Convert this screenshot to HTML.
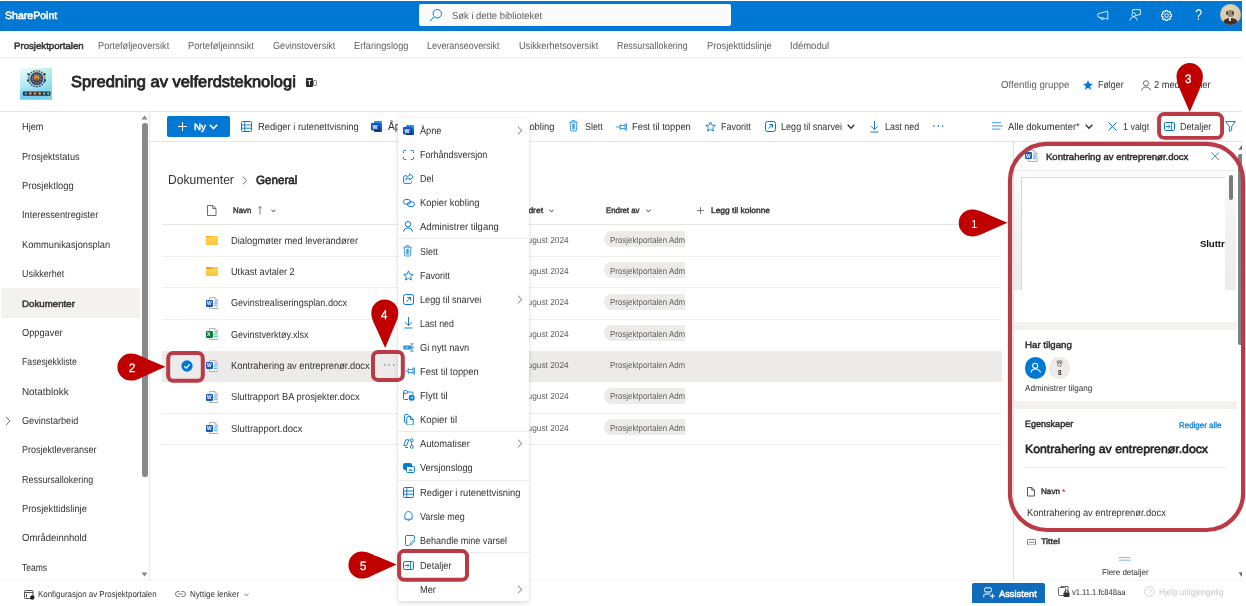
<!DOCTYPE html><html lang="nb"><head><meta charset="utf-8"><title>Dokumenter - General</title>
<style>
html,body{margin:0;padding:0;background:#fff;}
body{width:1246px;height:606px;overflow:hidden;position:relative;font-family:"Liberation Sans", sans-serif;}
#r{position:absolute;left:0;top:0;width:1246px;height:606px;overflow:hidden;will-change:transform;}
#r div,#r svg{position:absolute;}
#r span{position:absolute;white-space:nowrap;line-height:16px;height:16px;transform-origin:0 50%;}
</style></head><body><div id="r">
<div style="left:0px;top:1px;width:1242px;height:30px;background:#0078d4;"></div>
<div style="left:419.4px;top:4.3px;width:311.5px;height:21.3px;background:#fafafa;border-radius:2px;"></div>
<div style="left:0px;top:57px;width:1242px;height:1px;background:#edebe9;"></div>
<div style="left:0px;top:110.5px;width:1242px;height:1px;background:#e6e5e4;"></div>
<div style="left:1.2px;top:288.2px;width:139.3px;height:29.4px;background:#f3f2f1;"></div>
<div style="left:142.4px;top:123px;width:5.7px;height:354px;background:#8a8a8a;border-radius:2.8px;"></div>
<div style="left:149.3px;top:111px;width:1px;height:469px;background:#ececec;"></div>
<div style="left:167px;top:115.5px;width:62.5px;height:21.5px;background:#0078d4;border-radius:2px;"></div>
<div style="left:150px;top:140.5px;width:1092px;height:1px;background:#e6e5e4;"></div>
<div style="left:162px;top:224.3px;width:840px;height:1px;background:#e6e5e4;"></div>
<div style="left:162px;top:350.6px;width:840px;height:31.2px;background:#edebe9;"></div>
<div style="left:604px;top:231.0px;width:81.2px;height:16.1px;background:#edebe9;border-radius:8.1px 0 0 8.1px;"></div>
<div style="left:162px;top:255.9px;width:840px;height:1px;background:#f0efee;"></div>
<div style="left:604px;top:262.35px;width:81.2px;height:16.1px;background:#edebe9;border-radius:8.1px 0 0 8.1px;"></div>
<div style="left:162px;top:287.2px;width:840px;height:1px;background:#f0efee;"></div>
<div style="left:604px;top:293.7px;width:81.2px;height:16.1px;background:#edebe9;border-radius:8.1px 0 0 8.1px;"></div>
<div style="left:162px;top:318.6px;width:840px;height:1px;background:#f0efee;"></div>
<div style="left:604px;top:325.05px;width:81.2px;height:16.1px;background:#edebe9;border-radius:8.1px 0 0 8.1px;"></div>
<div style="left:604px;top:387.75px;width:81.2px;height:16.1px;background:#edebe9;border-radius:8.1px 0 0 8.1px;"></div>
<div style="left:162px;top:412.6px;width:840px;height:1px;background:#f0efee;"></div>
<div style="left:604px;top:419.1px;width:81.2px;height:16.1px;background:#edebe9;border-radius:8.1px 0 0 8.1px;"></div>
<div style="left:162px;top:444px;width:840px;height:1px;background:#f0efee;"></div>
<div style="left:1013px;top:141px;width:1px;height:439px;background:#e1dfdd;"></div>
<div style="left:1014px;top:170.2px;width:223px;height:1px;background:#edebe9;"></div>
<div style="left:1013.7px;top:171px;width:222.3px;height:118.8px;background:linear-gradient(180deg,#fdfdfd 0%,#f3f3f3 40%,#ebebeb 100%);"></div>
<div style="left:1021.3px;top:177.2px;width:203.7px;height:112.6px;box-sizing:border-box;border:1px solid #d3d7de;border-right:none;border-bottom:none;background:#fff;"></div>
<div style="left:1229.1px;top:175.3px;width:3.8px;height:24.9px;background:#7a7a7a;border-radius:1.9px;"></div>
<div style="left:1014px;top:322px;width:222.6px;height:8px;background:#f3f2f1;"></div>
<div style="left:1014px;top:401px;width:222.6px;height:7.6px;background:#f3f2f1;"></div>
<div style="left:1025px;top:467px;width:200.7px;height:1px;background:#e9e7e5;"></div>
<div style="left:1238.2px;top:153.9px;width:3.8px;height:190.7px;background:#808080;border-radius:1.9px 0 0 1.9px;"></div>
<div style="left:0px;top:580.5px;width:398px;height:26px;background:#fff;"></div>
<svg style="left:429px;top:8px;" width="14" height="14" viewBox="0 0 14 14"><circle cx="8.3" cy="5.7" r="4.2" fill="none" stroke="#0078d4" stroke-width="1"/><path d="M5.3 8.7 L1 13" stroke="#0078d4" stroke-width="1" fill="none"/></svg>
<svg style="left:1097px;top:10.3px;" width="12" height="11" viewBox="0 0 12 11"><path d="M1 3.7 L10.8 1.2 V9.2 L1 6.9 Q0.3 5.3 1 3.7 Z M3.6 7.6 Q3.6 9.6 5.2 9.6 Q6.6 9.6 6.6 8.3" fill="none" stroke="#fff" stroke-width="0.85" stroke-linejoin="round"/></svg>
<svg style="left:1129.3px;top:9px;" width="12" height="12" viewBox="0 0 12 12"><path d="M3.6 3.2 V0.6 H11.4 V5.6 H9.2 L7.8 7 V5.6" fill="none" stroke="#fff" stroke-width="0.85" stroke-linejoin="round"/><circle cx="4.6" cy="5.6" r="1.9" fill="none" stroke="#fff" stroke-width="0.85"/><path d="M0.8 11.6 L2.6 8.3 Q4.6 7.3 6.6 8.3 L8.4 11.6" fill="none" stroke="#fff" stroke-width="0.85"/></svg>
<svg style="left:1161px;top:9.8px;" width="11" height="11" viewBox="0 0 11 11"><path d="M10.62 4.61 L10.62 6.39 L9.37 6.49 L8.94 7.54 L9.75 8.49 L8.49 9.75 L7.54 8.94 L6.49 9.37 L6.39 10.62 L4.61 10.62 L4.51 9.37 L3.46 8.94 L2.51 9.75 L1.25 8.49 L2.06 7.54 L1.63 6.49 L0.38 6.39 L0.38 4.61 L1.63 4.51 L2.06 3.46 L1.25 2.51 L2.51 1.25 L3.46 2.06 L4.51 1.63 L4.61 0.38 L6.39 0.38 L6.49 1.63 L7.54 2.06 L8.49 1.25 L9.75 2.51 L8.94 3.46 L9.37 4.51 Z" fill="none" stroke="#fff" stroke-width="1.05" stroke-linejoin="round"/><circle cx="5.5" cy="5.5" r="1.8" fill="none" stroke="#fff" stroke-width="1"/></svg>
<div style="left:1219.9px;top:4.4px;width:21px;height:21px;border-radius:50%;overflow:hidden;background:radial-gradient(circle at 45% 35%,#e6d9bd 0%,#d9c8a6 60%,#c9b48e 100%);"><div style="left:3px;top:13.5px;width:15px;height:12px;border-radius:45% 45% 0 0;background:#3b342d;"></div><div style="left:7.3px;top:5.2px;width:6.4px;height:7.6px;border-radius:50%;background:#9a8a74;"></div><div style="left:6.6px;top:6.5px;width:2px;height:4px;border-radius:50%;background:#4a4037;"></div><div style="left:12.4px;top:6.5px;width:2px;height:4px;border-radius:50%;background:#4a4037;"></div><div style="left:9.6px;top:12.3px;width:1.8px;height:4.5px;background:#e9e2d2;"></div></div>
<svg style="left:19.8px;top:68.4px;" width="32.5" height="31.7" viewBox="0 0 32.5 31.7"><defs><linearGradient id="lg1" x1="0" y1="0" x2="0.35" y2="1"><stop offset="0" stop-color="#ecfafc"/><stop offset="0.5" stop-color="#b5ecf2"/><stop offset="1" stop-color="#4cbdf0"/></linearGradient><linearGradient id="lg2" x1="0" y1="0" x2="1" y2="0"><stop offset="0" stop-color="#fff" stop-opacity="0"/><stop offset="1" stop-color="#9fe6e0" stop-opacity="0.55"/></linearGradient></defs><rect width="32.5" height="31.7" fill="url(#lg1)"/><rect width="32.5" height="31.7" fill="url(#lg2)"/><circle cx="16.7" cy="10.7" r="8" fill="none" stroke="#2a3550" stroke-width="1.5" stroke-dasharray="1.8 1" opacity="0.8"/><circle cx="16.7" cy="10.7" r="6.6" fill="#2b3652" opacity="0.92"/><circle cx="16.7" cy="10.7" r="4.4" fill="none" stroke="#dfe8f0" stroke-width="0.9" stroke-dasharray="1.2 1.2" opacity="0.7"/><circle cx="16.7" cy="9.8" r="2.9" fill="#d78a35"/><rect x="15.2" y="10.6" width="3" height="2.4" fill="#7a4a20" opacity="0.8"/><circle cx="16.7" cy="3.4" r="1.1" fill="#e09a4a"/><rect x="7.4" y="5.2" width="2" height="2" fill="#2a3550"/><rect x="23.6" y="5.2" width="2" height="2" fill="#2a3550"/><rect x="7" y="11.5" width="2" height="2" fill="#2a3550"/><rect x="24" y="11.5" width="2" height="2" fill="#2a3550"/><rect x="7.8" y="8.4" width="0.9" height="1.7" fill="#3aa0e8"/><rect x="24.2" y="8.4" width="0.9" height="1.7" fill="#e09a4a"/><rect x="2.9" y="23.4" width="27.6" height="4.4" rx="1" fill="#1f2c44"/><circle cx="5.9" cy="25.6" r="1.4" fill="#2f9fe0"/><circle cx="10.4" cy="25.6" r="1.5" fill="#d98a3a"/><circle cx="15" cy="25.6" r="1.5" fill="#d98a3a"/><circle cx="19.6" cy="25.6" r="1.5" fill="#d98a3a"/><circle cx="24.2" cy="25.6" r="1.4" fill="#4fc0b0"/><circle cx="28.2" cy="25.6" r="1.3" fill="#4fc0b0"/></svg>
<div style="left:306px;top:78px;width:7px;height:9px;background:#2b2a29;border-radius:1px;"></div><div style="left:312.5px;top:79.5px;width:4px;height:6px;border:0.7px solid #8a8886;border-radius:1px;box-sizing:border-box;"></div>
<svg style="left:1083px;top:80px;" width="10" height="10" viewBox="0 0 10 10"><path d="M5 0.3 L6.4 3.6 L9.9 3.9 L7.2 6.2 L8.1 9.7 L5 7.8 L1.9 9.7 L2.8 6.2 L0.1 3.9 L3.6 3.6 Z" fill="#0078d4"/></svg>
<svg style="left:1141px;top:79.5px;" width="10" height="11" viewBox="0 0 10 11"><circle cx="5" cy="3.3" r="2.6" fill="none" stroke="#605e5c" stroke-width="0.9"/><path d="M0.6 10.5 C0.6 6 9.4 6 9.4 10.5" fill="none" stroke="#605e5c" stroke-width="0.9"/></svg>
<svg style="left:5px;top:415.5px;" width="6" height="10" viewBox="0 0 6 10"><path d="M1 0.8 L5 5 L1 9.2" fill="none" stroke="#605e5c" stroke-width="0.9"/></svg>
<svg style="left:141px;top:114.5px;" width="7" height="5" viewBox="0 0 7 5"><path d="M3.5 0.5 L6.5 4.5 H0.5 Z" fill="#8a8886"/></svg>
<svg style="left:141px;top:571.5px;" width="7" height="5" viewBox="0 0 7 5"><path d="M3.5 4.5 L6.5 0.5 H0.5 Z" fill="#8a8886"/></svg>
<svg style="left:178px;top:122px;" width="9" height="9" viewBox="0 0 9 9"><path d="M4.5 0 V9 M0 4.5 H9" stroke="#fff" stroke-width="1" fill="none"/></svg>
<svg style="left:209px;top:123.5px;" width="9" height="6" viewBox="0 0 9 6"><path d="M0.8 0.8 L4.5 4.6 L8.2 0.8" fill="none" stroke="#fff" stroke-width="1.5"/></svg>
<svg style="left:241px;top:121px;" width="11" height="11" viewBox="0 0 11 11"><rect x="0.5" y="0.5" width="10" height="10" rx="1" fill="none" stroke="#0078d4" stroke-width="1"/><path d="M0.5 4 H10.5 M0.5 7.2 H10.5 M3.8 0.5 V10.5" stroke="#0078d4" stroke-width="0.9" fill="none"/></svg>
<div style="left:373.6px;top:121px;width:8.5px;height:10.6px;border-radius:1px;background:linear-gradient(180deg,#2f8de8 0 30%,#1d6fd6 30% 55%,#1358c0 55% 78%,#0d47a8 78%);"></div><div style="left:371.1px;top:122.9px;width:7.6px;height:7.6px;border-radius:1px;background:#1556bd;box-shadow:0.5px 0.5px 1px rgba(0,0,0,0.35);"></div>
<svg style="left:569.2px;top:120.4px;" width="9" height="11.5" viewBox="0 0 9 11.5"><path d="M0.3 2.2 H8.7 M3 2 V0.9 Q3 0.5 3.4 0.5 H5.6 Q6 0.5 6 0.9 V2 M1.1 2.4 L1.6 10.3 Q1.65 11 2.4 11 H6.6 Q7.35 11 7.4 10.3 L7.9 2.4" fill="#e5f1fb" stroke="#0078d4" stroke-width="0.8" opacity="0.9"/><rect x="3.3" y="3.9" width="2.4" height="5.4" fill="#0078d4" opacity="0.7"/></svg>
<svg style="left:616.3px;top:122.5px;" width="11" height="8" viewBox="0 0 11 8"><path d="M0 4 H4.2" fill="none" stroke="#0078d4" stroke-width="0.9" opacity="0.8"/><path d="M4.2 1.2 V6.8 M4.2 2.4 H9 M4.2 5.6 H9 M9 1.2 L10.6 0.9 V7.1 L9 6.8 Z" fill="none" stroke="#0078d4" stroke-width="0.8" stroke-linejoin="round"/></svg>
<svg style="left:704.6px;top:120.8px;" width="11" height="11" viewBox="0 0 11 11"><path d="M5.5 0.9 L6.9 4.1 L10.3 4.4 L7.7 6.7 L8.5 10.1 L5.5 8.3 L2.5 10.1 L3.3 6.7 L0.7 4.4 L4.1 4.1 Z" fill="none" stroke="#0078d4" stroke-width="0.9" stroke-linejoin="miter"/></svg>
<svg style="left:764.5px;top:121px;" width="11" height="11" viewBox="0 0 11 11"><rect x="0.5" y="0.5" width="10" height="10" rx="2" fill="none" stroke="#0078d4" stroke-width="1"/><path d="M3.5 7.5 L7.3 3.7 M4.3 3.5 H7.5 V6.7" fill="none" stroke="#0078d4" stroke-width="0.95"/></svg>
<svg style="left:847px;top:124px;" width="8" height="5.5" viewBox="0 0 8 5.5"><path d="M0.7 0.7 L4 4.2 L7.3 0.7" fill="none" stroke="#323130" stroke-width="1.3"/></svg>
<svg style="left:870px;top:120.5px;" width="9" height="12" viewBox="0 0 9 12"><path d="M4.5 0 V8.5 M1 5.2 L4.5 8.7 L8 5.2 M0.5 11 H8.5" fill="none" stroke="#0078d4" stroke-width="0.95"/></svg>
<svg style="left:933px;top:125px;" width="11" height="2" viewBox="0 0 11 2"><rect x="0.3" y="0.3" width="1.4" height="1.4" fill="#0078d4"/><rect x="4.6" y="0.3" width="1.4" height="1.4" fill="#0078d4"/><rect x="8.9" y="0.3" width="1.4" height="1.4" fill="#0078d4"/></svg>
<svg style="left:991.8px;top:122.3px;" width="11" height="8" viewBox="0 0 11 8"><path d="M0 0.7 H9 M0 3.9 H10.8 M0 7.1 H8.5" stroke="#0078d4" stroke-width="0.9" fill="none" opacity="0.85"/></svg>
<svg style="left:1084.5px;top:124px;" width="8" height="5.5" viewBox="0 0 8 5.5"><path d="M0.7 0.7 L4 4.2 L7.3 0.7" fill="none" stroke="#323130" stroke-width="1.3"/></svg>
<svg style="left:1107.5px;top:122px;" width="9" height="9" viewBox="0 0 9 9"><path d="M0.5 0.5 L8.5 8.5 M8.5 0.5 L0.5 8.5" stroke="#0078d4" stroke-width="1" fill="none"/></svg>
<svg style="left:1164px;top:122px;" width="11" height="9" viewBox="0 0 11 9"><rect x="0.5" y="0.5" width="10" height="8" rx="1.3" fill="none" stroke="#0078d4" stroke-width="1"/><path d="M7.6 0.5 V8.5 M1.8 4.5 H6 M4.3 2.8 L6 4.5 L4.3 6.2" fill="none" stroke="#0078d4" stroke-width="0.9"/></svg>
<svg style="left:1225px;top:121px;" width="11" height="11" viewBox="0 0 11 11"><path d="M0.6 0.6 H10.4 L6.7 5.3 V9 L4.3 10.4 V5.3 Z" fill="none" stroke="#0078d4" stroke-width="0.95" stroke-linejoin="round"/></svg>
<svg style="left:242px;top:175.5px;" width="6" height="9" viewBox="0 0 6 9"><path d="M0.8 0.6 L4.8 4.5 L0.8 8.4" fill="none" stroke="#605e5c" stroke-width="0.9"/></svg>
<svg style="left:207.2px;top:204.6px;" width="9.5" height="11" viewBox="0 0 9.5 11"><path d="M0.5 0.5 H5.70 L9.0 3.52 V10.5 H0.5 Z M5.70 0.5 V3.52 H9.0" fill="none" stroke="#605e5c" stroke-width="0.9" stroke-linejoin="round"/></svg>
<svg style="left:257.5px;top:206px;" width="4" height="9" viewBox="0 0 4 9"><path d="M2 0.5 V8.5 M0.3 2.3 L2 0.5 L3.7 2.3" fill="none" stroke="#605e5c" stroke-width="0.8"/></svg>
<svg style="left:270.7px;top:208.5px;" width="5" height="4" viewBox="0 0 5 4"><path d="M0.4 0.6 L2.5 2.9 L4.6 0.6" fill="none" stroke="#323130" stroke-width="0.9"/></svg>
<svg style="left:548.7px;top:208.5px;" width="5" height="4" viewBox="0 0 5 4"><path d="M0.4 0.6 L2.5 2.9 L4.6 0.6" fill="none" stroke="#323130" stroke-width="0.9"/></svg>
<svg style="left:646px;top:208.5px;" width="5" height="4" viewBox="0 0 5 4"><path d="M0.4 0.6 L2.5 2.9 L4.6 0.6" fill="none" stroke="#323130" stroke-width="0.9"/></svg>
<svg style="left:697px;top:207px;" width="7" height="7" viewBox="0 0 7 7"><path d="M3.5 0 V7 M0 3.5 H7" stroke="#605e5c" stroke-width="0.8" fill="none"/></svg>
<div style="left:205.7px;top:235.7px;width:12.5px;height:9px;border-radius:1px;background:#ffc83d;"></div><div style="left:205.7px;top:235.7px;width:6px;height:3px;border-radius:1px 1px 0 0;background:#f0a30a;"></div><div style="left:205.7px;top:237.39999999999998px;width:12.5px;height:7.3px;border-radius:1px;background:linear-gradient(180deg,#ffd65c,#ffc332);"></div>
<div style="left:205.7px;top:267.05px;width:12.5px;height:9px;border-radius:1px;background:#ffc83d;"></div><div style="left:205.7px;top:267.05px;width:6px;height:3px;border-radius:1px 1px 0 0;background:#f0a30a;"></div><div style="left:205.7px;top:268.75px;width:12.5px;height:7.3px;border-radius:1px;background:linear-gradient(180deg,#ffd65c,#ffc332);"></div>
<svg style="left:208.7px;top:296.9px;" width="9.5" height="12" viewBox="0 0 9.5 12"><path d="M0.5 0.5 H6 L9 3.5 V11.5 H0.5 Z" fill="#fff" stroke="#a19f9d" stroke-width="0.8"/><path d="M6 0.5 V3.5 H9" fill="none" stroke="#a19f9d" stroke-width="0.7"/><path d="M5 5 H8 M5 6.8 H8 M5 8.6 H8" stroke="#41a5ee" stroke-width="0.9"/></svg>
<div style="left:205.7px;top:299.7px;width:7px;height:7px;border-radius:1px;background:#185abd;"></div>
<svg style="left:208.7px;top:328.25px;" width="9.5" height="12" viewBox="0 0 9.5 12"><path d="M0.5 0.5 H6 L9 3.5 V11.5 H0.5 Z" fill="#fff" stroke="#a19f9d" stroke-width="0.8"/><path d="M6 0.5 V3.5 H9" fill="none" stroke="#a19f9d" stroke-width="0.7"/><path d="M5 5 H8 M5 6.8 H8 M5 8.6 H8" stroke="#33c481" stroke-width="0.9"/></svg>
<div style="left:205.7px;top:331.05px;width:7px;height:7px;border-radius:1px;background:#107c41;"></div>
<svg style="left:208.7px;top:359.6px;" width="9.5" height="12" viewBox="0 0 9.5 12"><path d="M0.5 0.5 H6 L9 3.5 V11.5 H0.5 Z" fill="#fff" stroke="#a19f9d" stroke-width="0.8"/><path d="M6 0.5 V3.5 H9" fill="none" stroke="#a19f9d" stroke-width="0.7"/><path d="M5 5 H8 M5 6.8 H8 M5 8.6 H8" stroke="#41a5ee" stroke-width="0.9"/></svg>
<div style="left:205.7px;top:362.40000000000003px;width:7px;height:7px;border-radius:1px;background:#185abd;"></div>
<svg style="left:208.7px;top:390.95px;" width="9.5" height="12" viewBox="0 0 9.5 12"><path d="M0.5 0.5 H6 L9 3.5 V11.5 H0.5 Z" fill="#fff" stroke="#a19f9d" stroke-width="0.8"/><path d="M6 0.5 V3.5 H9" fill="none" stroke="#a19f9d" stroke-width="0.7"/><path d="M5 5 H8 M5 6.8 H8 M5 8.6 H8" stroke="#41a5ee" stroke-width="0.9"/></svg>
<div style="left:205.7px;top:393.75px;width:7px;height:7px;border-radius:1px;background:#185abd;"></div>
<svg style="left:208.7px;top:422.3px;" width="9.5" height="12" viewBox="0 0 9.5 12"><path d="M0.5 0.5 H6 L9 3.5 V11.5 H0.5 Z" fill="#fff" stroke="#a19f9d" stroke-width="0.8"/><path d="M6 0.5 V3.5 H9" fill="none" stroke="#a19f9d" stroke-width="0.7"/><path d="M5 5 H8 M5 6.8 H8 M5 8.6 H8" stroke="#41a5ee" stroke-width="0.9"/></svg>
<div style="left:205.7px;top:425.1px;width:7px;height:7px;border-radius:1px;background:#185abd;"></div>
<svg style="left:180.9px;top:360.4px;" width="12" height="12" viewBox="0 0 12 12"><circle cx="6" cy="6" r="5.65" fill="#0078d4"/><path d="M3.3 6.2 L5.2 8.1 L8.8 4.3" fill="none" stroke="#fff" stroke-width="1.25"/></svg>
<svg style="left:383.6px;top:364px;" width="11" height="2" viewBox="0 0 11 2"><rect x="0.2" y="0.2" width="1.4" height="1.4" fill="#8a8886"/><rect x="4.6" y="0.2" width="1.4" height="1.4" fill="#8a8886"/><rect x="9" y="0.2" width="1.4" height="1.4" fill="#8a8886"/></svg>
<svg style="left:1028px;top:149.5px;" width="9.5" height="12" viewBox="0 0 9.5 12"><path d="M0.5 0.5 H6 L9 3.5 V11.5 H0.5 Z" fill="#fff" stroke="#a19f9d" stroke-width="0.8"/><path d="M6 0.5 V3.5 H9" fill="none" stroke="#a19f9d" stroke-width="0.7"/><path d="M5 5 H8 M5 6.8 H8 M5 8.6 H8" stroke="#41a5ee" stroke-width="0.9"/></svg>
<div style="left:1024.8px;top:152.3px;width:7px;height:7px;background:#185abd;border-radius:1px;"></div>
<svg style="left:1211px;top:152px;" width="8.4" height="8.4" viewBox="0 0 8.4 8.4"><path d="M0.3 0.3 L8.1 8.1 M8.1 0.3 L0.3 8.1" stroke="#0078d4" stroke-width="0.85" fill="none"/></svg>
<div style="left:1199.9px;top:235.6px;width:25.1px;height:16px;overflow:hidden;"><span style="left:0;top:0;font-size:9.7px;font-weight:700;color:#111;letter-spacing:-0.1px;">Sluttrapport</span></div>
<div style="left:1024.8px;top:357px;width:21.6px;height:21.6px;border-radius:50%;background:#0078d4;"></div>
<svg style="left:1030px;top:362px;" width="12" height="12" viewBox="0 0 12 12"><circle cx="5.2" cy="3.8" r="2.5" fill="none" stroke="#fff" stroke-width="1.1"/><path d="M1.2 10.5 C1.2 6.3 7.5 6 8.8 8.3 L11 10.3" fill="none" stroke="#fff" stroke-width="1.1"/></svg>
<div style="left:1048.9px;top:357px;width:21.6px;height:21.6px;border-radius:50%;background:#edebe9;"></div>
<svg style="left:1056.2px;top:359.8px;" width="7" height="7" viewBox="0 0 7 7"><circle cx="2.2" cy="1.8" r="1.2" fill="none" stroke="#444" stroke-width="0.6"/><circle cx="4.8" cy="1.8" r="1.2" fill="none" stroke="#444" stroke-width="0.6"/><circle cx="3.5" cy="4.6" r="1.8" fill="none" stroke="#444" stroke-width="0.6"/></svg>
<svg style="left:1026.6px;top:487px;" width="8" height="9.5" viewBox="0 0 8 9.5"><path d="M0.5 0.5 H4.80 L7.5 3.04 V9.0 H0.5 Z M4.80 0.5 V3.04 H7.5" fill="none" stroke="#484644" stroke-width="0.9" stroke-linejoin="round"/></svg>
<svg style="left:1026.6px;top:538.5px;" width="9" height="6.5" viewBox="0 0 9 6.5"><rect x="0.5" y="0.5" width="8" height="5.5" rx="0.8" fill="none" stroke="#605e5c" stroke-width="0.8"/><path d="M2 3.3 H7" stroke="#605e5c" stroke-width="0.8"/></svg>
<svg style="left:1119.4px;top:556.5px;" width="11.5" height="4" viewBox="0 0 11.5 4"><path d="M0 0.6 H11.5 M0 3.2 H11.5" stroke="#6bb3ea" stroke-width="0.9"/></svg>
<svg style="left:1238px;top:145px;" width="4" height="5" viewBox="0 0 4 5"><path d="M3.5 0.3 L6.5 4.7 H0.5 Z" fill="#707070"/></svg>
<svg style="left:1238px;top:571.5px;" width="4" height="5" viewBox="0 0 4 5"><path d="M3.5 4.7 L6.5 0.3 H0.5 Z" fill="#707070"/></svg>
<svg style="left:23.5px;top:589.5px;" width="11" height="10" viewBox="0 0 11 10"><rect x="0.5" y="0.5" width="8.5" height="8" rx="1" fill="none" stroke="#444" stroke-width="0.9"/><path d="M0.5 2.5 H9 M2.5 4 V7.5" stroke="#444" stroke-width="0.9"/><circle cx="8.3" cy="7.5" r="2.2" fill="#222"/></svg>
<svg style="left:174.5px;top:591px;" width="11" height="6" viewBox="0 0 11 6"><path d="M4.5 0.5 H3 Q0.5 0.5 0.5 3 Q0.5 5.5 3 5.5 H4.5 M6.5 0.5 H8 Q10.5 0.5 10.5 3 Q10.5 5.5 8 5.5 H6.5 M3.3 3 H7.7" fill="none" stroke="#605e5c" stroke-width="0.85"/></svg>
<svg style="left:243.5px;top:592.8px;" width="5" height="4" viewBox="0 0 5 4"><path d="M0.4 0.6 L2.5 2.9 L4.6 0.6" fill="none" stroke="#605e5c" stroke-width="0.8"/></svg>
<div style="left:972.3px;top:582.9px;width:72.4px;height:19.8px;background:#0f6cbd;border-radius:2px 2px 0 0;"></div>
<svg style="left:983px;top:586.5px;" width="12" height="12" viewBox="0 0 12 12"><rect x="1.5" y="0.8" width="7" height="4.2" rx="1.5" fill="none" stroke="#fff" stroke-width="1"/><path d="M0.8 10.5 V8.5 Q0.8 7 2.3 7 H7" fill="none" stroke="#fff" stroke-width="1"/><path d="M9.3 6.5 V11.5 M6.8 9 H11.8" stroke="#fff" stroke-width="1"/></svg>
<svg style="left:1057.8px;top:586px;" width="12" height="11" viewBox="0 0 12 11"><rect x="0.5" y="1.5" width="7" height="8" rx="1" fill="none" stroke="#444" stroke-width="0.8"/><path d="M3 1.5 V0.5 H10 V7" fill="none" stroke="#444" stroke-width="0.8"/><rect x="5.5" y="6.5" width="6" height="4.5" rx="0.8" fill="#333"/><path d="M6.8 6.5 V5.2 Q8.5 3.6 10.2 5.2 V6.5" fill="none" stroke="#333" stroke-width="0.9"/></svg>
<svg style="left:1144.4px;top:586.3px;" width="11" height="11" viewBox="0 0 11 11"><circle cx="5.5" cy="5.5" r="4.8" fill="none" stroke="#c8c6c4" stroke-width="0.8"/></svg>
<span style="left:4.5px;top:6.9px;font-size:10.62px;color:#fff;-webkit-text-stroke:0.53px #fff;transform:scaleX(0.9943) rotate(0.03deg);">SharePoint</span>
<span style="left:451.6px;top:7.9px;font-size:10.19px;color:#605e5c;transform:scaleX(0.9275) rotate(0.03deg);">Søk i dette biblioteket</span>
<span style="left:1194.8px;top:7.0px;font-size:15.52px;color:#fff;transform:scaleX(0.8333) rotate(0.03deg);opacity:0.95;">?</span>
<span style="left:14.3px;top:38.3px;font-size:9.29px;color:#323130;-webkit-text-stroke:0.46px #323130;transform:scaleX(1.0391) rotate(0.03deg);">Prosjektportalen</span>
<span style="left:97.6px;top:38.3px;font-size:10.19px;color:#605e5c;transform:scaleX(0.9061) rotate(0.03deg);">Porteføljeoversikt</span>
<span style="left:187.9px;top:38.3px;font-size:10.19px;color:#605e5c;transform:scaleX(0.9105) rotate(0.03deg);">Porteføljeinnsikt</span>
<span style="left:272.6px;top:38.3px;font-size:10.19px;color:#605e5c;transform:scaleX(0.896) rotate(0.03deg);">Gevinstoversikt</span>
<span style="left:353.9px;top:38.3px;font-size:10.19px;color:#605e5c;transform:scaleX(0.9076) rotate(0.03deg);">Erfaringslogg</span>
<span style="left:427.4px;top:38.3px;font-size:10.19px;color:#605e5c;transform:scaleX(0.8781) rotate(0.03deg);">Leveranseoversikt</span>
<span style="left:518.7px;top:38.3px;font-size:10.19px;color:#605e5c;transform:scaleX(0.8992) rotate(0.03deg);">Usikkerhetsoversikt</span>
<span style="left:616.8px;top:38.3px;font-size:10.19px;color:#605e5c;transform:scaleX(0.8745) rotate(0.03deg);">Ressursallokering</span>
<span style="left:706.6px;top:38.3px;font-size:10.19px;color:#605e5c;transform:scaleX(0.9155) rotate(0.03deg);">Prosjekttidslinje</span>
<span style="left:790.1px;top:38.3px;font-size:10.19px;color:#605e5c;transform:scaleX(0.9341) rotate(0.03deg);">Idémodul</span>
<span style="left:71.2px;top:74.1px;font-size:15.93px;color:#252423;-webkit-text-stroke:0.8px #252423;transform:scaleX(1.0324) rotate(0.03deg);line-height:24px;height:24px;margin-top:-4px;">Spredning av velferdsteknologi</span>
<span style="left:307.6px;top:75.0px;font-size:6.3px;color:#fff;font-weight:700;">T</span>
<span style="left:1001.2px;top:77.2px;font-size:10.19px;color:#605e5c;transform:scaleX(0.9487) rotate(0.03deg);">Offentlig gruppe</span>
<span style="left:1097.8px;top:77.2px;font-size:10.19px;color:#323130;transform:scaleX(0.871) rotate(0.03deg);">Følger</span>
<span style="left:1154px;top:77.2px;font-size:10.19px;color:#323130;transform:scaleX(0.9102) rotate(0.03deg);">2 medlemmer</span>
<span style="left:21.6px;top:119.4px;font-size:10.19px;color:#323130;transform:scaleX(0.9053) rotate(0.03deg);">Hjem</span>
<span style="left:21.6px;top:148.76px;font-size:10.19px;color:#323130;transform:scaleX(0.9015) rotate(0.03deg);">Prosjektstatus</span>
<span style="left:21.6px;top:178.12px;font-size:10.19px;color:#323130;transform:scaleX(0.9235) rotate(0.03deg);">Prosjektlogg</span>
<span style="left:21.6px;top:207.48px;font-size:10.19px;color:#323130;transform:scaleX(0.9056) rotate(0.03deg);">Interessentregister</span>
<span style="left:21.6px;top:236.84px;font-size:10.19px;color:#323130;transform:scaleX(0.9112) rotate(0.03deg);">Kommunikasjonsplan</span>
<span style="left:21.6px;top:266.2px;font-size:10.19px;color:#323130;transform:scaleX(0.878) rotate(0.03deg);">Usikkerhet</span>
<span style="left:21.6px;top:295.56px;font-size:9.29px;color:#323130;-webkit-text-stroke:0.46px #323130;transform:scaleX(1.0462) rotate(0.03deg);">Dokumenter</span>
<span style="left:21.6px;top:324.92px;font-size:10.19px;color:#323130;transform:scaleX(0.9088) rotate(0.03deg);">Oppgaver</span>
<span style="left:21.6px;top:354.28px;font-size:10.19px;color:#323130;transform:scaleX(0.8593) rotate(0.03deg);">Fasesjekkliste</span>
<span style="left:21.6px;top:383.64px;font-size:10.19px;color:#323130;transform:scaleX(0.9696) rotate(0.03deg);">Notatblokk</span>
<span style="left:21.6px;top:413.0px;font-size:10.19px;color:#323130;transform:scaleX(0.897) rotate(0.03deg);">Gevinstarbeid</span>
<span style="left:21.6px;top:442.36px;font-size:10.19px;color:#323130;transform:scaleX(0.8855) rotate(0.03deg);">Prosjektleveranser</span>
<span style="left:21.6px;top:471.72px;font-size:10.19px;color:#323130;transform:scaleX(0.8795) rotate(0.03deg);">Ressursallokering</span>
<span style="left:21.6px;top:501.08px;font-size:10.19px;color:#323130;transform:scaleX(0.9183) rotate(0.03deg);">Prosjekttidslinje</span>
<span style="left:21.6px;top:530.44px;font-size:10.19px;color:#323130;transform:scaleX(0.933) rotate(0.03deg);">Områdeinnhold</span>
<span style="left:21.6px;top:559.8px;font-size:10.19px;color:#323130;transform:scaleX(0.8375) rotate(0.03deg);">Teams</span>
<span style="left:193.6px;top:119.1px;font-size:9.29px;color:#fff;-webkit-text-stroke:0.46px #fff;transform:scaleX(1.049) rotate(0.03deg);">Ny</span>
<span style="left:257.6px;top:119.1px;font-size:10.19px;color:#323130;transform:scaleX(0.917) rotate(0.03deg);">Rediger i rutenettvisning</span>
<span style="left:372.5px;top:119.1px;font-size:5.33px;color:#fff;font-weight:700;">W</span>
<span style="left:388px;top:119.1px;font-size:10.19px;color:#323130;">Åpne</span>
<span style="left:495.2px;top:119.1px;font-size:10.19px;color:#323130;transform:scaleX(0.9214) rotate(0.03deg);">Kopier kobling</span>
<span style="left:584.7px;top:119.1px;font-size:10.19px;color:#323130;transform:scaleX(0.8743) rotate(0.03deg);">Slett</span>
<span style="left:632px;top:119.1px;font-size:10.19px;color:#323130;transform:scaleX(0.9201) rotate(0.03deg);">Fest til toppen</span>
<span style="left:720.9px;top:119.1px;font-size:10.19px;color:#323130;transform:scaleX(0.8873) rotate(0.03deg);">Favoritt</span>
<span style="left:781px;top:119.1px;font-size:10.19px;color:#323130;transform:scaleX(0.8915) rotate(0.03deg);">Legg til snarvei</span>
<span style="left:885.4px;top:119.1px;font-size:10.19px;color:#323130;transform:scaleX(0.8762) rotate(0.03deg);">Last ned</span>
<span style="left:1007.7px;top:119.1px;font-size:10.19px;color:#323130;transform:scaleX(0.9268) rotate(0.03deg);">Alle dokumenter*</span>
<span style="left:1123.4px;top:119.1px;font-size:10.19px;color:#323130;transform:scaleX(0.8771) rotate(0.03deg);">1 valgt</span>
<span style="left:1180.3px;top:119.1px;font-size:10.19px;color:#323130;transform:scaleX(0.8927) rotate(0.03deg);">Detaljer</span>
<span style="left:167.6px;top:171.7px;font-size:13.09px;color:#323130;transform:scaleX(0.9251) rotate(0.03deg);line-height:20px;height:20px;margin-top:-2px;">Dokumenter</span>
<span style="left:255.8px;top:171.7px;font-size:11.95px;color:#252423;-webkit-text-stroke:0.6px #252423;transform:scaleX(0.9745) rotate(0.03deg);line-height:20px;height:20px;margin-top:-2px;">General</span>
<span style="left:233.3px;top:202.7px;font-size:7.96px;color:#323130;-webkit-text-stroke:0.4px #323130;transform:scaleX(0.985) rotate(0.03deg);">Navn</span>
<span style="left:518px;top:202.7px;font-size:7.96px;color:#323130;-webkit-text-stroke:0.4px #323130;transform:scaleX(1.0667) rotate(0.03deg);">Endret</span>
<span style="left:606.2px;top:202.7px;font-size:7.96px;color:#323130;-webkit-text-stroke:0.4px #323130;transform:scaleX(0.981) rotate(0.03deg);">Endret av</span>
<span style="left:711px;top:202.7px;font-size:7.96px;color:#323130;-webkit-text-stroke:0.4px #323130;transform:scaleX(1.0589) rotate(0.03deg);">Legg til kolonne</span>
<span style="left:230.8px;top:232.6px;font-size:10.19px;color:#323130;transform:scaleX(0.9177) rotate(0.03deg);">Dialogmøter med leverandører</span>
<span style="left:523px;top:231.5px;font-size:8.73px;color:#605e5c;transform:scaleX(0.95) rotate(0.03deg);">august 2024</span>
<div style="left:609.7px;top:231.5px;width:75.5px;height:16px;overflow:hidden;"><span style="left:0;top:0;font-size:8.73px;color:#605e5c;transform:scaleX(0.907) rotate(0.03deg);">Prosjektportalen Administrator</span></div>
<span style="left:230.8px;top:263.95px;font-size:10.19px;color:#323130;transform:scaleX(0.9013) rotate(0.03deg);">Utkast avtaler 2</span>
<span style="left:523px;top:262.85px;font-size:8.73px;color:#605e5c;transform:scaleX(0.95) rotate(0.03deg);">august 2024</span>
<div style="left:609.7px;top:262.85px;width:75.5px;height:16px;overflow:hidden;"><span style="left:0;top:0;font-size:8.73px;color:#605e5c;transform:scaleX(0.907) rotate(0.03deg);">Prosjektportalen Administrator</span></div>
<span style="left:206.89999999999998px;top:295.7px;font-size:4.85px;color:#fff;font-weight:700;">W</span>
<span style="left:230.8px;top:295.3px;font-size:10.19px;color:#323130;transform:scaleX(0.8928) rotate(0.03deg);">Gevinstrealiseringsplan.docx</span>
<span style="left:523px;top:294.2px;font-size:8.73px;color:#605e5c;transform:scaleX(0.95) rotate(0.03deg);">august 2024</span>
<div style="left:609.7px;top:294.2px;width:75.5px;height:16px;overflow:hidden;"><span style="left:0;top:0;font-size:8.73px;color:#605e5c;transform:scaleX(0.907) rotate(0.03deg);">Prosjektportalen Administrator</span></div>
<span style="left:206.89999999999998px;top:327.05px;font-size:4.85px;color:#fff;font-weight:700;">X</span>
<span style="left:230.8px;top:326.65px;font-size:10.19px;color:#323130;transform:scaleX(0.8865) rotate(0.03deg);">Gevinstverktøy.xlsx</span>
<span style="left:523px;top:325.55px;font-size:8.73px;color:#605e5c;transform:scaleX(0.95) rotate(0.03deg);">august 2024</span>
<div style="left:609.7px;top:325.55px;width:75.5px;height:16px;overflow:hidden;"><span style="left:0;top:0;font-size:8.73px;color:#605e5c;transform:scaleX(0.907) rotate(0.03deg);">Prosjektportalen Administrator</span></div>
<span style="left:206.89999999999998px;top:358.4px;font-size:4.85px;color:#fff;font-weight:700;">W</span>
<span style="left:230.8px;top:358.0px;font-size:10.19px;color:#323130;transform:scaleX(0.9152) rotate(0.03deg);">Kontrahering av entreprenør.docx</span>
<span style="left:523px;top:356.9px;font-size:8.73px;color:#605e5c;transform:scaleX(0.95) rotate(0.03deg);">august 2024</span>
<div style="left:609.7px;top:356.9px;width:75.5px;height:16px;overflow:hidden;"><span style="left:0;top:0;font-size:8.73px;color:#605e5c;transform:scaleX(0.907) rotate(0.03deg);">Prosjektportalen Administrator</span></div>
<span style="left:206.89999999999998px;top:389.75px;font-size:4.85px;color:#fff;font-weight:700;">W</span>
<span style="left:230.8px;top:389.35px;font-size:10.19px;color:#323130;transform:scaleX(0.9208) rotate(0.03deg);">Sluttrapport BA prosjekter.docx</span>
<span style="left:523px;top:388.25px;font-size:8.73px;color:#605e5c;transform:scaleX(0.95) rotate(0.03deg);">august 2024</span>
<div style="left:609.7px;top:388.25px;width:75.5px;height:16px;overflow:hidden;"><span style="left:0;top:0;font-size:8.73px;color:#605e5c;transform:scaleX(0.907) rotate(0.03deg);">Prosjektportalen Administrator</span></div>
<span style="left:206.89999999999998px;top:421.1px;font-size:4.85px;color:#fff;font-weight:700;">W</span>
<span style="left:230.8px;top:420.7px;font-size:10.19px;color:#323130;transform:scaleX(0.9284) rotate(0.03deg);">Sluttrapport.docx</span>
<span style="left:523px;top:419.6px;font-size:8.73px;color:#605e5c;transform:scaleX(0.95) rotate(0.03deg);">august 2024</span>
<div style="left:609.7px;top:419.6px;width:75.5px;height:16px;overflow:hidden;"><span style="left:0;top:0;font-size:8.73px;color:#605e5c;transform:scaleX(0.907) rotate(0.03deg);">Prosjektportalen Administrator</span></div>
<span style="left:1026px;top:148.6px;font-size:4.85px;color:#fff;font-weight:700;">W</span>
<span style="left:1045.9px;top:149.4px;font-size:9.29px;color:#323130;-webkit-text-stroke:0.46px #323130;transform:scaleX(1.0298) rotate(0.03deg);">Kontrahering av entreprenør.docx</span>
<span style="left:1024.8px;top:337.4px;font-size:9.29px;color:#323130;-webkit-text-stroke:0.46px #323130;transform:scaleX(1.0448) rotate(0.03deg);">Har tilgang</span>
<span style="left:1058px;top:365.4px;font-size:6.3px;color:#333;font-weight:700;">8</span>
<span style="left:1024.8px;top:379.7px;font-size:8.73px;color:#323130;transform:scaleX(0.9307) rotate(0.03deg);">Administrer tilgang</span>
<span style="left:1024.8px;top:416.1px;font-size:9.29px;color:#323130;-webkit-text-stroke:0.46px #323130;transform:scaleX(0.9728) rotate(0.03deg);">Egenskaper</span>
<span style="left:1179.3px;top:417.2px;font-size:8.3px;color:#0078d4;transform:scaleX(0.9575) rotate(0.03deg);-webkit-text-stroke:0.25px #0078d4;">Rediger alle</span>
<span style="left:1024.9px;top:441.0px;font-size:11.95px;color:#252423;-webkit-text-stroke:0.6px #252423;transform:scaleX(1.029) rotate(0.03deg);line-height:20px;height:20px;margin-top:-2px;">Kontrahering av entreprenør.docx</span>
<span style="left:1040.5px;top:484.2px;font-size:7.96px;color:#323130;-webkit-text-stroke:0.4px #323130;transform:scaleX(1.0227) rotate(0.03deg);">Navn</span>
<span style="left:1062px;top:483.9px;font-size:8.73px;color:#a4262c;">*</span>
<span style="left:1026.6px;top:505.3px;font-size:10.19px;color:#323130;transform:scaleX(0.9159) rotate(0.03deg);">Kontrahering av entreprenør.docx</span>
<span style="left:1040.5px;top:534.0px;font-size:7.96px;color:#323130;-webkit-text-stroke:0.4px #323130;transform:scaleX(1.1207) rotate(0.03deg);">Tittel</span>
<span style="left:1101.9px;top:563.6px;font-size:8.3px;color:#323130;transform:scaleX(0.9624) rotate(0.03deg);">Flere detaljer</span>
<span style="left:37.6px;top:586.4px;font-size:8.73px;color:#323130;transform:scaleX(0.9105) rotate(0.03deg);">Konfigurasjon av Prosjektportalen</span>
<span style="left:189.7px;top:586.4px;font-size:8.73px;color:#323130;transform:scaleX(0.921) rotate(0.03deg);">Nyttige lenker</span>
<span style="left:998.6px;top:585.9px;font-size:9.29px;color:#fff;-webkit-text-stroke:0.46px #fff;transform:scaleX(1.0038) rotate(0.03deg);">Assistent</span>
<span style="left:1072.3px;top:583.9px;font-size:8.34px;color:#323130;transform:scaleX(0.9104) rotate(0.03deg);">v1.11.1.fc848aa</span>
<span style="left:1148.1px;top:584.4px;font-size:7.27px;color:#c8c6c4;">?</span>
<span style="left:1159px;top:583.9px;font-size:8.73px;color:#c8c6c4;transform:scaleX(0.9438) rotate(0.03deg);">Hjelp utilgjengelig</span>
<div style="left:0px;top:579.7px;width:1242px;height:1px;background:#f5f5f5;"></div>
<div style="left:398px;top:117.5px;width:130.7px;height:483px;background:#fff;border-radius:2px;box-shadow:0 2px 5px rgba(0,0,0,0.13),0 0 2px rgba(0,0,0,0.10);"></div>
<div style="left:398px;top:237.9px;width:130.7px;height:1px;background:#edebe9;"></div>
<div style="left:398px;top:431.1px;width:130.7px;height:1px;background:#edebe9;"></div>
<div style="left:398px;top:479.7px;width:130.7px;height:1px;background:#edebe9;"></div>
<div style="left:398px;top:551.9px;width:130.7px;height:1px;background:#edebe9;"></div>
<svg style="left:516.5px;top:126.19999999999999px;" width="6" height="9" viewBox="0 0 6 9"><path d="M0.8 0.6 L4.8 4.5 L0.8 8.4" fill="none" stroke="#605e5c" stroke-width="0.85"/></svg>
<div style="left:405.7px;top:124.89999999999999px;width:8.5px;height:10.6px;border-radius:1px;background:linear-gradient(180deg,#2f8de8 0 30%,#1d6fd6 30% 55%,#1358c0 55% 78%,#0d47a8 78%);"></div><div style="left:403.2px;top:126.8px;width:7.6px;height:7.6px;border-radius:1px;background:#1556bd;box-shadow:0.5px 0.5px 1px rgba(0,0,0,0.35);"></div>
<svg style="left:402.9px;top:149.6px;" width="11" height="10" viewBox="0 0 11 10"><path d="M0.5 3 V1.5 Q0.5 0.5 1.5 0.5 H3.2 M7.8 0.5 H9.5 Q10.5 0.5 10.5 1.5 V3 M10.5 7 V8.5 Q10.5 9.5 9.5 9.5 H7.8 M3.2 9.5 H1.5 Q0.5 9.5 0.5 8.5 V7" fill="none" stroke="#0078d4" stroke-width="1"/></svg>
<svg style="left:402.9px;top:172.9px;" width="11" height="11" viewBox="0 0 11 11"><path d="M4 2.8 H1.8 Q0.6 2.8 0.6 4 V9.2 Q0.6 10.4 1.8 10.4 H7.4 Q8.6 10.4 8.6 9.2 V8.4" fill="none" stroke="#0078d4" stroke-width="0.95"/><path d="M6.6 0.7 L10.4 3.9 L6.6 7.1 V5.2 C4.8 5.2 3.8 5.9 3 7.2 C3.2 4.6 4.4 2.9 6.6 2.6 Z" fill="none" stroke="#0078d4" stroke-width="0.9" stroke-linejoin="round"/></svg>
<svg style="left:402.9px;top:198.9px;" width="12" height="8" viewBox="0 0 12 8"><rect x="0.5" y="0.5" width="7" height="4.6" rx="2.3" fill="none" stroke="#0078d4" stroke-width="0.95"/><rect x="4.5" y="2.9" width="7" height="4.6" rx="2.3" fill="none" stroke="#0078d4" stroke-width="0.95"/></svg>
<svg style="left:403.4px;top:221.1px;" width="10" height="11" viewBox="0 0 10 11"><circle cx="5" cy="3.2" r="2.7" fill="none" stroke="#0078d4" stroke-width="1"/><path d="M0.6 10.7 C0.6 5.8 9.4 5.8 9.4 10.7" fill="none" stroke="#0078d4" stroke-width="1"/></svg>
<svg style="left:403.4px;top:245.2px;" width="9" height="11.5" viewBox="0 0 9 11.5"><path d="M0.3 2.2 H8.7 M3 2 V0.9 Q3 0.5 3.4 0.5 H5.6 Q6 0.5 6 0.9 V2 M1.1 2.4 L1.6 10.3 Q1.65 11 2.4 11 H6.6 Q7.35 11 7.4 10.3 L7.9 2.4" fill="#e5f1fb" stroke="#0078d4" stroke-width="0.8" opacity="0.9"/><rect x="3.3" y="3.9" width="2.4" height="5.4" fill="#0078d4" opacity="0.7"/></svg>
<svg style="left:402.9px;top:269.6px;" width="11" height="11" viewBox="0 0 11 11"><path d="M5.5 0.9 L6.9 4.1 L10.3 4.4 L7.7 6.7 L8.5 10.1 L5.5 8.3 L2.5 10.1 L3.3 6.7 L0.7 4.4 L4.1 4.1 Z" fill="none" stroke="#0078d4" stroke-width="0.9" stroke-linejoin="miter"/></svg>
<svg style="left:516.5px;top:294.6px;" width="6" height="9" viewBox="0 0 6 9"><path d="M0.8 0.6 L4.8 4.5 L0.8 8.4" fill="none" stroke="#605e5c" stroke-width="0.85"/></svg>
<svg style="left:402.9px;top:293.6px;" width="11" height="11" viewBox="0 0 11 11"><rect x="0.5" y="0.5" width="10" height="10" rx="2" fill="none" stroke="#0078d4" stroke-width="1"/><path d="M3.5 7.5 L7.3 3.7 M4.3 3.5 H7.5 V6.7" fill="none" stroke="#0078d4" stroke-width="0.95"/></svg>
<svg style="left:403.9px;top:317.2px;" width="9" height="12" viewBox="0 0 9 12"><path d="M4.5 0 V8.5 M1 5.2 L4.5 8.7 L8 5.2 M0.5 11 H8.5" fill="none" stroke="#0078d4" stroke-width="0.95"/></svg>
<svg style="left:403.29999999999995px;top:342.8px;" width="12" height="9" viewBox="0 0 12 9"><rect x="0.4" y="2.6" width="7.6" height="3.8" rx="0.6" fill="#0078d4" opacity="0.85"/><rect x="2.4" y="3.7" width="3" height="1.6" fill="#9ccbf2"/><path d="M7.4 0.5 Q8.9 0.5 8.9 1.6 V7.4 Q8.9 8.5 7.4 8.5 M10.4 0.5 Q8.9 0.5 8.9 1.6 M10.4 8.5 Q8.9 8.5 8.9 7.4 M8.9 4.5 H11" fill="none" stroke="#0078d4" stroke-width="0.8"/></svg>
<svg style="left:403.5px;top:367.4px;" width="11" height="8" viewBox="0 0 11 8"><path d="M0 4 H4.2" fill="none" stroke="#0078d4" stroke-width="0.9" opacity="0.8"/><path d="M4.2 1.2 V6.8 M4.2 2.4 H9 M4.2 5.6 H9 M9 1.2 L10.6 0.9 V7.1 L9 6.8 Z" fill="none" stroke="#0078d4" stroke-width="0.8" stroke-linejoin="round"/></svg>
<svg style="left:402.9px;top:390.4px;" width="12" height="11" viewBox="0 0 12 11"><path d="M5 9.5 H1.5 Q0.5 9.5 0.5 8.5 V1.5 Q0.5 0.5 1.5 0.5 H3.5 L5 2 H9 Q10 2 10 3 V4.5 M0.5 3.3 H4 L5 2" fill="none" stroke="#0078d4" stroke-width="0.95"/><circle cx="8.7" cy="7.7" r="3" fill="#0078d4"/><path d="M7.2 7.7 H10 M8.9 6.5 L10.1 7.7 L8.9 8.9" fill="none" stroke="#fff" stroke-width="0.7"/></svg>
<svg style="left:403.5px;top:413.79999999999995px;" width="10" height="11.5" viewBox="0 0 10 11.5"><path d="M2.6 8.6 H1.3 Q0.5 8.6 0.5 7.8 V1.3 Q0.5 0.5 1.3 0.5 H4 L6 2.5" fill="none" stroke="#0078d4" stroke-width="0.9"/><path d="M2.8 3.4 Q2.8 2.6 3.6 2.6 H6.4 L9.3 5.5 V10.2 Q9.3 11 8.5 11 H3.6 Q2.8 11 2.8 10.2 Z M6.4 2.6 V5.5 H9.3" fill="none" stroke="#0078d4" stroke-width="0.9" stroke-linejoin="round"/></svg>
<svg style="left:516.5px;top:439.3px;" width="6" height="9" viewBox="0 0 6 9"><path d="M0.8 0.6 L4.8 4.5 L0.8 8.4" fill="none" stroke="#605e5c" stroke-width="0.85"/></svg>
<svg style="left:402.9px;top:438.3px;" width="11" height="11" viewBox="0 0 11 11"><path d="M0.8 7.5 L2.8 1.8 H5.8 L3.8 7.5 Z" fill="none" stroke="#0078d4" stroke-width="0.9" stroke-linejoin="round"/><circle cx="8.7" cy="2.2" r="1.5" fill="none" stroke="#0078d4" stroke-width="0.9"/><circle cx="8.7" cy="8.8" r="1.5" fill="none" stroke="#0078d4" stroke-width="0.9"/><path d="M8.7 3.7 V7.3 M2 9.5 H5" fill="none" stroke="#0078d4" stroke-width="0.9"/></svg>
<svg style="left:402.9px;top:462.7px;" width="12" height="10" viewBox="0 0 12 10"><rect x="0.5" y="0.5" width="8" height="6" rx="1" fill="#0078d4" stroke="#0078d4" stroke-width="0.9"/><rect x="3.5" y="3.5" width="8" height="6" rx="1" fill="#fff" stroke="#0078d4" stroke-width="0.95"/><path d="M5.5 7.8 L7 5.8 L8 7 L8.7 6.3 L9.8 7.8 Z" fill="#0078d4"/></svg>
<svg style="left:402.9px;top:486.6px;" width="11" height="11" viewBox="0 0 11 11"><rect x="0.5" y="0.5" width="10" height="10" rx="1" fill="none" stroke="#0078d4" stroke-width="1"/><path d="M0.5 4 H10.5 M0.5 7.2 H10.5 M3.8 0.5 V10.5" stroke="#0078d4" stroke-width="0.9" fill="none"/></svg>
<svg style="left:404.09999999999997px;top:510.9px;" width="9" height="11.5" viewBox="0 0 9 11.5"><path d="M0.9 8.2 V4.3 C0.9 -0.7 8.1 -0.7 8.1 4.3 V8.2 Z M3.2 8.5 Q4.5 11.3 5.8 8.5" fill="none" stroke="#0078d4" stroke-width="0.9" stroke-linejoin="round"/></svg>
<svg style="left:404.9px;top:535.0px;" width="10" height="11" viewBox="0 0 10 11"><path d="M9.5 4 V1.7 Q9.5 0.5 8.3 0.5 H1.7 Q0.5 0.5 0.5 1.7 V9.3 Q0.5 10.5 1.7 10.5 H4" fill="none" stroke="#0078d4" stroke-width="0.95"/><path d="M5 10.2 L5.5 8 L8.8 4.7 L10 5.9 L6.7 9.2 Z" fill="none" stroke="#0078d4" stroke-width="0.85" stroke-linejoin="round"/></svg>
<svg style="left:402.9px;top:561.0px;" width="11" height="9" viewBox="0 0 11 9"><rect x="0.5" y="0.5" width="10" height="8" rx="1.3" fill="none" stroke="#0078d4" stroke-width="1"/><path d="M7.6 0.5 V8.5 M1.8 4.5 H6 M4.3 2.8 L6 4.5 L4.3 6.2" fill="none" stroke="#0078d4" stroke-width="0.9"/></svg>
<svg style="left:516.5px;top:585.2px;" width="6" height="9" viewBox="0 0 6 9"><path d="M0.8 0.6 L4.8 4.5 L0.8 8.4" fill="none" stroke="#605e5c" stroke-width="0.85"/></svg>
<span style="left:419.6px;top:123.1px;font-size:10.19px;color:#323130;transform:scaleX(0.9005) rotate(0.03deg);">Åpne</span>
<span style="left:404.6px;top:123.1px;font-size:5.33px;color:#fff;font-weight:700;">W</span>
<span style="left:419.6px;top:147.0px;font-size:10.19px;color:#323130;transform:scaleX(0.8869) rotate(0.03deg);">Forhåndsversjon</span>
<span style="left:419.6px;top:170.8px;font-size:10.19px;color:#323130;transform:scaleX(0.8778) rotate(0.03deg);">Del</span>
<span style="left:419.6px;top:194.8px;font-size:10.19px;color:#323130;transform:scaleX(0.9214) rotate(0.03deg);">Kopier kobling</span>
<span style="left:419.6px;top:219.0px;font-size:10.19px;color:#323130;transform:scaleX(0.9353) rotate(0.03deg);">Administrer tilgang</span>
<span style="left:419.6px;top:243.6px;font-size:10.19px;color:#323130;transform:scaleX(0.8792) rotate(0.03deg);">Slett</span>
<span style="left:419.6px;top:267.5px;font-size:10.19px;color:#323130;transform:scaleX(0.8873) rotate(0.03deg);">Favoritt</span>
<span style="left:419.6px;top:291.5px;font-size:10.19px;color:#323130;transform:scaleX(0.8974) rotate(0.03deg);">Legg til snarvei</span>
<span style="left:419.6px;top:315.6px;font-size:10.19px;color:#323130;transform:scaleX(0.8685) rotate(0.03deg);">Last ned</span>
<span style="left:419.6px;top:339.7px;font-size:10.19px;color:#323130;transform:scaleX(0.9064) rotate(0.03deg);">Gi nytt navn</span>
<span style="left:419.6px;top:363.8px;font-size:10.19px;color:#323130;transform:scaleX(0.9185) rotate(0.03deg);">Fest til toppen</span>
<span style="left:419.6px;top:387.8px;font-size:10.19px;color:#323130;transform:scaleX(0.9391) rotate(0.03deg);">Flytt til</span>
<span style="left:419.6px;top:411.8px;font-size:10.19px;color:#323130;transform:scaleX(0.9349) rotate(0.03deg);">Kopier til</span>
<span style="left:419.6px;top:436.2px;font-size:10.19px;color:#323130;transform:scaleX(0.9193) rotate(0.03deg);">Automatiser</span>
<span style="left:419.6px;top:460.1px;font-size:10.19px;color:#323130;transform:scaleX(0.903) rotate(0.03deg);">Versjonslogg</span>
<span style="left:419.6px;top:484.5px;font-size:10.19px;color:#323130;transform:scaleX(0.9161) rotate(0.03deg);">Rediger i rutenettvisning</span>
<span style="left:419.6px;top:508.9px;font-size:10.19px;color:#323130;transform:scaleX(0.8836) rotate(0.03deg);">Varsle meg</span>
<span style="left:419.6px;top:532.9px;font-size:10.19px;color:#323130;transform:scaleX(0.8893) rotate(0.03deg);">Behandle mine varsel</span>
<span style="left:419.6px;top:557.9px;font-size:10.19px;color:#323130;transform:scaleX(0.8984) rotate(0.03deg);">Detaljer</span>
<span style="left:419.6px;top:582.1px;font-size:10.19px;color:#323130;transform:scaleX(0.907) rotate(0.03deg);">Mer</span>
<svg style="left:0;top:0;" width="1246" height="606" viewBox="0 0 1246 606"><rect x="1159.05" y="114.05" width="63.00000000000001" height="23.8" rx="5.05" fill="none" stroke="#ba3a46" stroke-width="3.9"/></svg>
<svg style="left:0;top:0;" width="1246" height="606" viewBox="0 0 1246 606"><rect x="168.2" y="352.9" width="34.6" height="27.9" rx="5.0" fill="none" stroke="#ba3a46" stroke-width="4.0"/></svg>
<svg style="left:0;top:0;" width="1246" height="606" viewBox="0 0 1246 606"><rect x="373.0" y="352.0" width="29.799999999999997" height="27.9" rx="5.0" fill="none" stroke="#ba3a46" stroke-width="4.0"/></svg>
<svg style="left:0;top:0;" width="1246" height="606" viewBox="0 0 1246 606"><rect x="399.1" y="551.1" width="67.9" height="28.6" rx="5.0" fill="none" stroke="#ba3a46" stroke-width="4.0"/></svg>
<svg style="left:0;top:0;" width="1246" height="606" viewBox="0 0 1246 606"><rect x="1010.0" y="143.9" width="233.10000000000002" height="386.1" rx="36.9" fill="none" stroke="#ba3a46" stroke-width="4.2"/></svg>
<svg style="left:0;top:0;" width="1246" height="606" viewBox="0 0 1246 606"><path transform="translate(972.1 223) rotate(-90.49)" d="M-13.4 0 A13.4 13.4 0 0 1 13.4 0 C13.4 5.95 10.73 10.41 8.65 15.47 L0 35.30 L-8.65 15.47 C-10.73 10.41 -13.4 5.95 -13.4 0 Z" fill="#c00000"/></svg>
<svg style="left:0;top:0;" width="1246" height="606" viewBox="0 0 1246 606"><path transform="translate(130.9 367.1) rotate(-90.66)" d="M-13.5 0 A13.5 13.5 0 0 1 13.5 0 C13.5 5.81 10.49 10.18 8.45 15.12 L0 34.50 L-8.45 15.12 C-10.49 10.18 -13.5 5.81 -13.5 0 Z" fill="#c00000"/></svg>
<svg style="left:0;top:0;" width="1246" height="606" viewBox="0 0 1246 606"><path transform="translate(1189.7 76.3) rotate(0.00)" d="M-13.2 0 A13.2 13.2 0 0 1 13.2 0 C13.2 6.00 10.82 10.50 8.72 15.60 L0 35.60 L-8.72 15.60 C-10.82 10.50 -13.2 6.00 -13.2 0 Z" fill="#c00000"/></svg>
<svg style="left:0;top:0;" width="1246" height="606" viewBox="0 0 1246 606"><path transform="translate(384.8 313) rotate(-0.65)" d="M-13.5 0 A13.5 13.5 0 0 1 13.5 0 C13.5 5.90 10.64 10.32 8.57 15.34 L0 35.00 L-8.57 15.34 C-10.64 10.32 -13.5 5.90 -13.5 0 Z" fill="#c00000"/></svg>
<svg style="left:0;top:0;" width="1246" height="606" viewBox="0 0 1246 606"><path transform="translate(362 565) rotate(-90.66)" d="M-13.6 0 A13.6 13.6 0 0 1 13.6 0 C13.6 5.83 10.52 10.21 8.48 15.16 L0 34.60 L-8.48 15.16 C-10.52 10.21 -13.6 5.83 -13.6 0 Z" fill="#c00000"/></svg>
<span style="left:970.5999999999999px;top:215.9px;font-size:11.5px;color:#fff;transform:scaleX(0.999) rotate(0.03deg);font-family:"DejaVu Sans",sans-serif;-webkit-text-stroke:0.25px #fff;">1</span>
<span style="left:129.4px;top:360.1px;font-size:12.22px;color:#fff;transform:scaleX(0.9416) rotate(0.03deg);-webkit-text-stroke:0.3px #fff;">2</span>
<span style="left:1185.3px;top:70.8px;font-size:12.22px;color:#fff;transform:scaleX(0.9416) rotate(0.03deg);-webkit-text-stroke:0.3px #fff;">3</span>
<span style="left:381.1px;top:307.2px;font-size:12.22px;color:#fff;transform:scaleX(0.9416) rotate(0.03deg);-webkit-text-stroke:0.3px #fff;">4</span>
<span style="left:360.3px;top:557.9px;font-size:12.22px;color:#fff;transform:scaleX(0.9416) rotate(0.03deg);-webkit-text-stroke:0.3px #fff;">5</span>
</div></body></html>
